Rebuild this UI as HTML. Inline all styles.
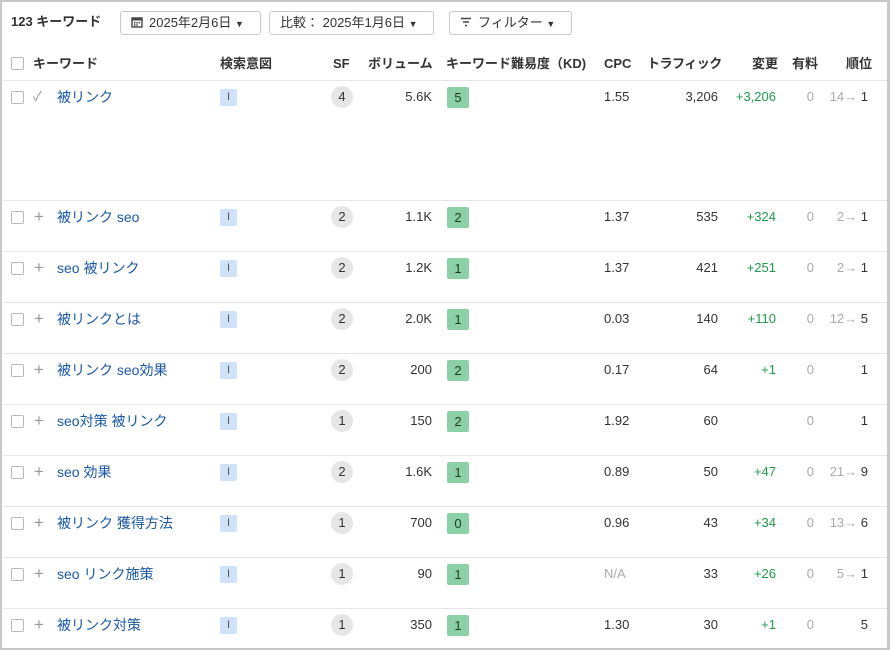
<!DOCTYPE html>
<html><head><meta charset="utf-8"><style>
*{box-sizing:border-box;margin:0;padding:0}
body{width:890px;height:650px;background:#fff;font-family:"Liberation Sans","Noto Sans CJK JP",sans-serif;font-size:13px;color:#333;position:relative;overflow:hidden}
.frame{position:absolute;left:0;top:0;width:890px;height:650px;border:2px solid #c8c8c8;border-right-width:3px}
.a{position:absolute;line-height:16px;white-space:nowrap}
.btn{position:absolute;top:11px;height:24px;border:1px solid #c9c9c9;border-radius:3px;line-height:22px;padding-left:10px;font-size:13px;color:#333}
.h{font-weight:bold;color:#333;top:56px}
.line{position:absolute;left:3px;right:3px;height:1px;background:#e6e6e6}
.cb{position:absolute;left:11px;width:13px;height:13px;border:1px solid #b8b8b8;border-radius:2px;background:#fff}
.kw{color:#1a58a6;left:57px;font-size:14px}
.in{position:absolute;left:220px;width:17px;height:17px;background:#cfe2f7;border-radius:2px;color:#555;font-size:11px;text-align:center;line-height:17px}
.sf{position:absolute;left:331px;width:22px;height:22px;border-radius:50%;background:#e6e6e6;text-align:center;line-height:22px;color:#333}
.kd{position:absolute;left:447px;width:22px;height:21px;background:#8bd0a7;border-radius:2px;text-align:center;line-height:21px;color:#1f3a2a}
.r{text-align:right}
.g{color:#1f9a4b}
.gr{color:#aaa}
.pl{position:absolute;left:34px;color:#999;font-size:17px;line-height:16px}
</style></head><body>
<div class="frame"></div>
<div class="a" style="left:11px;top:12px;font-weight:bold;line-height:20px">123 キーワード</div>
<div class="btn" style="left:120px;width:141px"><svg width="12" height="12" viewBox="0 0 12 12" style="vertical-align:-1px;margin-right:6px"><rect x="1" y="2" width="10" height="9" fill="none" stroke="#444" stroke-width="1.4"/><rect x="1" y="2" width="10" height="2.5" fill="#444"/><rect x="3" y="6" width="1.5" height="1.5" fill="#444"/><rect x="5.3" y="6" width="1.5" height="1.5" fill="#444"/><rect x="7.6" y="6" width="1.5" height="1.5" fill="#444"/><rect x="3" y="8.3" width="1.5" height="1.5" fill="#444"/><rect x="5.3" y="8.3" width="1.5" height="1.5" fill="#444"/></svg>2025年2月6日 <span style="font-size:9px">▼</span></div>
<div class="btn" style="left:269px;width:165px">比較： 2025年1月6日 <span style="font-size:9px">▼</span></div>
<div class="btn" style="left:449px;width:123px"><svg width="12" height="10" viewBox="0 0 12 10" style="margin-right:6px"><path d="M1 1.5h10M3 5h6M5 8.5h2" stroke="#444" stroke-width="1.4"/></svg>フィルター <span style="font-size:9px">▼</span></div>

<div class="cb" style="top:57px"></div>
<div class="a h" style="left:33px">キーワード</div>
<div class="a h" style="left:220px">検索意図</div>
<div class="a h" style="left:333px">SF</div>
<div class="a h" style="left:368px">ボリューム</div>
<div class="a h" style="left:446px">キーワード難易度（KD)</div>
<div class="a h" style="left:604px">CPC</div>
<div class="a h" style="left:647px;letter-spacing:-0.5px">トラフィック</div>
<div class="a h" style="left:752px">変更</div>
<div class="a h" style="left:792px">有料</div>
<div class="a h" style="left:846px">順位</div>
<div class="line" style="top:80px"></div>

<div class="line" style="top:200px"></div><div class="line" style="top:251px"></div><div class="line" style="top:302px"></div><div class="line" style="top:353px"></div><div class="line" style="top:404px"></div><div class="line" style="top:455px"></div><div class="line" style="top:506px"></div><div class="line" style="top:557px"></div><div class="line" style="top:608px"></div>

<div style="position:absolute;left:0;top:89px;width:890px;height:18px">
<div class="cb" style="top:2px"></div><div class="a" style="left:33px;color:#999">✓</div>
<div class="a kw">被リンク</div><div class="in">I</div><div class="sf" style="top:-3px">4</div>
<div class="a r" style="left:380px;width:52px">5.6K</div><div class="kd" style="top:-2px">5</div>
<div class="a" style="left:604px">1.55</div><div class="a r" style="left:660px;width:58px">3,206</div>
<div class="a r g" style="left:720px;width:56px">+3,206</div><div class="a r gr" style="left:790px;width:24px">0</div>
<div class="a r" style="left:820px;width:48px"><span class="gr">14→</span> 1</div></div>

<div style="position:absolute;left:0;top:209px;width:890px;height:18px">
<div class="cb" style="top:2px"></div><div class="pl">+</div>
<div class="a kw">被リンク seo</div><div class="in">I</div><div class="sf" style="top:-3px">2</div>
<div class="a r" style="left:380px;width:52px">1.1K</div><div class="kd" style="top:-2px">2</div>
<div class="a" style="left:604px">1.37</div><div class="a r" style="left:660px;width:58px">535</div>
<div class="a r g" style="left:720px;width:56px">+324</div><div class="a r gr" style="left:790px;width:24px">0</div>
<div class="a r" style="left:820px;width:48px"><span class="gr">2→</span> 1</div></div>

<div style="position:absolute;left:0;top:260px;width:890px;height:18px">
<div class="cb" style="top:2px"></div><div class="pl">+</div>
<div class="a kw">seo 被リンク</div><div class="in">I</div><div class="sf" style="top:-3px">2</div>
<div class="a r" style="left:380px;width:52px">1.2K</div><div class="kd" style="top:-2px">1</div>
<div class="a" style="left:604px">1.37</div><div class="a r" style="left:660px;width:58px">421</div>
<div class="a r g" style="left:720px;width:56px">+251</div><div class="a r gr" style="left:790px;width:24px">0</div>
<div class="a r" style="left:820px;width:48px"><span class="gr">2→</span> 1</div></div>

<div style="position:absolute;left:0;top:311px;width:890px;height:18px">
<div class="cb" style="top:2px"></div><div class="pl">+</div>
<div class="a kw">被リンクとは</div><div class="in">I</div><div class="sf" style="top:-3px">2</div>
<div class="a r" style="left:380px;width:52px">2.0K</div><div class="kd" style="top:-2px">1</div>
<div class="a" style="left:604px">0.03</div><div class="a r" style="left:660px;width:58px">140</div>
<div class="a r g" style="left:720px;width:56px">+110</div><div class="a r gr" style="left:790px;width:24px">0</div>
<div class="a r" style="left:820px;width:48px"><span class="gr">12→</span> 5</div></div>

<div style="position:absolute;left:0;top:362px;width:890px;height:18px">
<div class="cb" style="top:2px"></div><div class="pl">+</div>
<div class="a kw">被リンク seo効果</div><div class="in">I</div><div class="sf" style="top:-3px">2</div>
<div class="a r" style="left:380px;width:52px">200</div><div class="kd" style="top:-2px">2</div>
<div class="a" style="left:604px">0.17</div><div class="a r" style="left:660px;width:58px">64</div>
<div class="a r g" style="left:720px;width:56px">+1</div><div class="a r gr" style="left:790px;width:24px">0</div>
<div class="a r" style="left:820px;width:48px">1</div></div>

<div style="position:absolute;left:0;top:413px;width:890px;height:18px">
<div class="cb" style="top:2px"></div><div class="pl">+</div>
<div class="a kw">seo対策 被リンク</div><div class="in">I</div><div class="sf" style="top:-3px">1</div>
<div class="a r" style="left:380px;width:52px">150</div><div class="kd" style="top:-2px">2</div>
<div class="a" style="left:604px">1.92</div><div class="a r" style="left:660px;width:58px">60</div>
<div class="a r gr" style="left:790px;width:24px">0</div>
<div class="a r" style="left:820px;width:48px">1</div></div>

<div style="position:absolute;left:0;top:464px;width:890px;height:18px">
<div class="cb" style="top:2px"></div><div class="pl">+</div>
<div class="a kw">seo 効果</div><div class="in">I</div><div class="sf" style="top:-3px">2</div>
<div class="a r" style="left:380px;width:52px">1.6K</div><div class="kd" style="top:-2px">1</div>
<div class="a" style="left:604px">0.89</div><div class="a r" style="left:660px;width:58px">50</div>
<div class="a r g" style="left:720px;width:56px">+47</div><div class="a r gr" style="left:790px;width:24px">0</div>
<div class="a r" style="left:820px;width:48px"><span class="gr">21→</span> 9</div></div>

<div style="position:absolute;left:0;top:515px;width:890px;height:18px">
<div class="cb" style="top:2px"></div><div class="pl">+</div>
<div class="a kw">被リンク 獲得方法</div><div class="in">I</div><div class="sf" style="top:-3px">1</div>
<div class="a r" style="left:380px;width:52px">700</div><div class="kd" style="top:-2px">0</div>
<div class="a" style="left:604px">0.96</div><div class="a r" style="left:660px;width:58px">43</div>
<div class="a r g" style="left:720px;width:56px">+34</div><div class="a r gr" style="left:790px;width:24px">0</div>
<div class="a r" style="left:820px;width:48px"><span class="gr">13→</span> 6</div></div>

<div style="position:absolute;left:0;top:566px;width:890px;height:18px">
<div class="cb" style="top:2px"></div><div class="pl">+</div>
<div class="a kw">seo リンク施策</div><div class="in">I</div><div class="sf" style="top:-3px">1</div>
<div class="a r" style="left:380px;width:52px">90</div><div class="kd" style="top:-2px">1</div>
<div class="a gr" style="left:604px">N/A</div><div class="a r" style="left:660px;width:58px">33</div>
<div class="a r g" style="left:720px;width:56px">+26</div><div class="a r gr" style="left:790px;width:24px">0</div>
<div class="a r" style="left:820px;width:48px"><span class="gr">5→</span> 1</div></div>

<div style="position:absolute;left:0;top:617px;width:890px;height:18px">
<div class="cb" style="top:2px"></div><div class="pl">+</div>
<div class="a kw">被リンク対策</div><div class="in">I</div><div class="sf" style="top:-3px">1</div>
<div class="a r" style="left:380px;width:52px">350</div><div class="kd" style="top:-2px">1</div>
<div class="a" style="left:604px">1.30</div><div class="a r" style="left:660px;width:58px">30</div>
<div class="a r g" style="left:720px;width:56px">+1</div><div class="a r gr" style="left:790px;width:24px">0</div>
<div class="a r" style="left:820px;width:48px">5</div></div>
</body></html>
